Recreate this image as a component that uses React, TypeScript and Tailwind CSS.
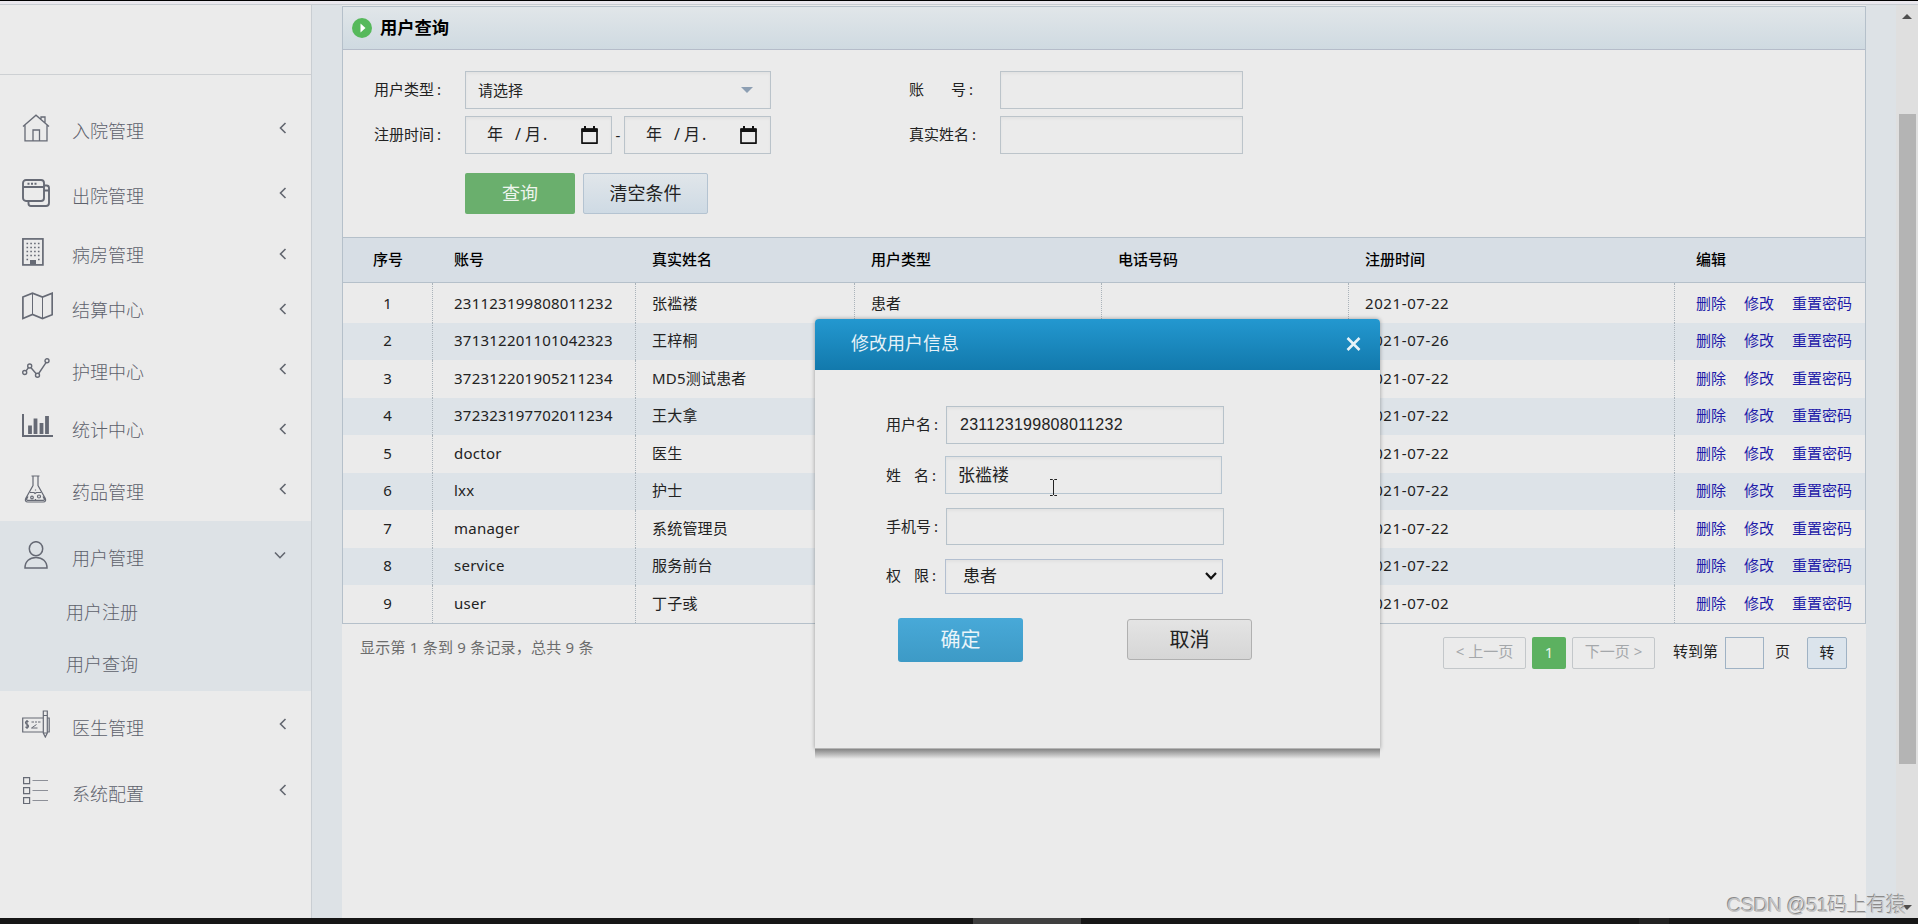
import type { ReactNode } from "react";

const Svg = ({ w, h, children, sw = 1.3 }: { w: number; h: number; sw?: number; children: ReactNode }) => (
  <svg width={w} height={h} viewBox={`0 0 ${w} ${h}`} fill="none" stroke="#666a75" strokeWidth={sw}>
    {children}
  </svg>
);

const HomeIcon = () => (
  <Svg w={28} h={28}>
    <path d="M1 12.5 14 1.2 27 12.5M3 11v15.8h22V11M19 5V3h4v5.500M11 26.500V16h6.500v10.500" />
  </Svg>
);
const WindowsIcon = () => (
  <Svg w={28} h={28} sw={1.9}>
    <rect x="1" y="1" width="21" height="21" rx="3" />
    <path d="M1 8h21M22 6.500h2.500a2.500 2.500 0 0 1 2.500 2.500v15a3 3 0 0 1-3 3H9a2.500 2.500 0 0 1-2.500-2.500V22M22 11.500h5" />
    <path d="M5.500 4.700h2M9 4.700h2M12.500 4.700h2" />
  </Svg>
);
const BuildingIcon = () => (
  <Svg w={28} h={28} sw={1.7}>
    <rect x="0.900" y="0.900" width="20" height="26" />
    <path d="M4.500 5.500h14M4.500 9.500h14M4.500 13.500h14M4.500 17.500h14" strokeDasharray="1.600 2.200" />
    <path d="M4.500 21.500h1.600M16 21.500h1.600" />
    <path d="M8 22h6v4.500H8z" fill="#666a75" stroke="none" />
  </Svg>
);
const MapIcon = () => (
  <Svg w={31} h={28} sw={1.7}>
    <path d="M.9 5 10.500 1.200 20.500 5 30.200 1.200v21.500L20.500 26.500 10.500 22.500.900 26.500z" />
    <path d="M10.500 1v21.500M20.500 5v21.500" strokeWidth="1" />
  </Svg>
);
const GraphIcon = () => (
  <Svg w={28} h={20} sw={1.4}>
    <circle cx="2.700" cy="14.500" r="2" />
    <circle cx="7.700" cy="8" r="2" />
    <circle cx="15.500" cy="17.300" r="2" />
    <circle cx="25" cy="2.800" r="2" />
    <path d="M4 13 6.500 9.700M9 9.700 14.200 15.700M16.700 15.500 24 4.700" />
  </Svg>
);
const BarsIcon = () => (
  <Svg w={31} h={24} sw={2}>
    <path d="M1 0v22h30" />
    <path d="M8 20v-8.500M13.500 20V4.500M19.500 20V9M25 20V2" strokeWidth="3.800" />
  </Svg>
);
const FlaskIcon = () => (
  <Svg w={28} h={28} sw={1.2}>
    <path d="M9.500 1h8M11 1v9.500L3.700 23.500c-.900 2 0 3.500 2 3.500h15.600c2 0 2.900-1.500 2-3.500L16 10.500V1M8 17.500h4l1 1 1.500-1H19M6 21.500l-1.200 2.200c-.500 1 0 1.700 1 1.700h15.400c1 0 1.500-.700 1-1.700L21 21.500" />
    <circle cx="10" cy="22.500" r="1.300" />
    <circle cx="17" cy="21.500" r="1.500" />
    <path d="M13.500 14.500v1M13.500 24v1" />
  </Svg>
);
const UserIcon = () => (
  <Svg w={28} h={28} sw={1.5}>
    <ellipse cx="14" cy="7.700" rx="6.700" ry="7" />
    <path d="M3 27c0-6.500 4.500-10.500 11-10.500S25 20.500 25 27z" />
  </Svg>
);
const ChequeIcon = () => (
  <Svg w={28} h={28} sw={1.2}>
    <path d="M21 8H.7v14H21M25.500 8h1.700v14h-1.700M21.300 1h4v22l-2 4-2-4zM21.300 5.500h4M21.300 23h4" />
    <path d="M6.500 11.700c-2-1.200-3.700.300-2.700 1.800.7 1.200 2.500 1 2.700 2.500.1 1.700-2 2-3.200.900M5 10v9" />
    <path d="M9.500 12h2.500M13 12h2M16 12h2.500M14.500 14.500l-5 3.500h6" strokeWidth="1" />
  </Svg>
);
const ListIcon = () => (
  <Svg w={28} h={28} sw={1.2}>
    <path d="M1.600 1.600h6v6h-6zM1.600 11.600h6v6h-6zM1.600 21.600h6v6h-6z" />
    <path d="M10.500 4.500H26M10.500 14.500H26M10.500 24.500H26" strokeWidth="1" stroke="#8d9098" />
  </Svg>
);

const Chevron = ({ open = false }: { open?: boolean }) => (
  <svg width="12" height="12" viewBox="0 0 12 12" fill="none" stroke="#62666f" strokeWidth="1.600">
    {open ? <path d="M1 3.500 6 8.700 11 3.500" /> : <path d="M8.500 1 3.500 6 8.500 11" />}
  </svg>
);

type Item = { label: string; icon: ReactNode; row: string; chev: string; open?: boolean };

const topItems: Item[] = [
  { label: "入院管理", icon: <HomeIcon />, row: "h-[65px]", chev: "" },
  { label: "出院管理", icon: <WindowsIcon />, row: "h-[65px]", chev: "" },
  { label: "病房管理", icon: <BuildingIcon />, row: "h-[53px]", chev: "pt-[4px]" },
  { label: "结算中心", icon: <MapIcon />, row: "h-[56px]", chev: "pt-[5px]" },
  { label: "护理中心", icon: <GraphIcon />, row: "h-[68px]", chev: "pt-[1px]" },
  { label: "统计中心", icon: <BarsIcon />, row: "h-[48px]", chev: "pt-[5px]" },
  { label: "药品管理", icon: <FlaskIcon />, row: "mt-[6px] h-[65px]", chev: "" },
];
const bottomItems: Item[] = [
  { label: "医生管理", icon: <ChequeIcon />, row: "h-[66px]", chev: "" },
  { label: "系统配置", icon: <ListIcon />, row: "h-[66px]", chev: "" },
];

const NavRow = ({ item }: { item: Item }) => (
  <div className={`flex items-center pl-[22px] ${item.row}`}>
    <span className="w-[50px] shrink-0">{item.icon}</span>
    <span className="w-[202px] shrink-0 pt-[7px] text-[18px] leading-6 font-light text-[#5d616b]">{item.label}</span>
    <span className={item.open ? "" : `pl-[3px] ${item.chev}`}>
      <Chevron open={item.open} />
    </span>
  </div>
);

const Sidebar = () => (
  <aside className="flex w-[312px] shrink-0 flex-col border-r border-[#c9ced3] bg-[#ebebeb]">
    <div className="h-[70px] border-b border-[#cdd0d3]" />
    <nav className="pt-[20px]">
      {topItems.map((i) => (
        <NavRow key={i.label} item={i} />
      ))}
      <div className="h-[170px] bg-[#dde2e6] text-[18px] font-light text-[#5d616b]">
        <NavRow item={{ label: "用户管理", icon: <UserIcon />, row: "h-[67px]", chev: "", open: true }} />
        <div className="flex h-[49px] items-center pl-[66px]">用户注册</div>
        <div className="flex h-[54px] items-center pl-[66px]">用户查询</div>
      </div>
      {bottomItems.map((i) => (
        <NavRow key={i.label} item={i} />
      ))}
    </nav>
  </aside>
);

const CalendarIcon = () => (
  <svg width="17" height="18" viewBox="0 0 17 18">
    <path d="M1 3h15v14.200H1z" fill="none" stroke="#111" strokeWidth="1.700" strokeLinejoin="round" />
    <path d="M.5 2.500h16V6H.5zM3 0h2v3H3zM12 0h2v3h-2z" fill="#111" />
  </svg>
);

const DateBox = () => (
  <div className="flex h-[38px] w-[147px] items-center border border-[#bac3ca] pl-[21px] text-[16px] shadow-[inset_0_2px_3px_rgba(0,0,0,0.04)]">
    <span className="w-[28px] pb-[2px]">年</span>
    <span className="w-[10px] pb-[2px]">/</span>
    <span className="w-[18px] pb-[2px]">月</span>
    <span className="w-[38px] pb-[2px]">.</span>
    <CalendarIcon />
  </div>
);

const Colon = () => <span className="pl-[3px]">:</span>;

const SearchForm = () => (
  <div className="flex h-[187px] flex-col pt-[21px] text-[15px]">
    <div className="flex h-[38px] items-center">
      <span className="w-[122px] pb-[2px] pl-[31px]">
        用户类型
        <Colon />
      </span>
      <div className="flex h-[38px] w-[306px] items-center justify-between border border-[#bac3ca] pr-[17px] pl-[12px] shadow-[inset_0_2px_3px_rgba(0,0,0,0.04)]">
        请选择
        <svg width="12" height="6" viewBox="0 0 12 6">
          <path d="M0 0h12L6 6z" fill="#8d9fb3" />
        </svg>
      </div>
      <span className="ml-[138px] flex w-[91px] pb-[2px]">
        <span className="w-[42px]">账</span>号
        <Colon />
      </span>
      <div className="h-[38px] w-[243px] border border-[#bcc4ca] shadow-[inset_0_2px_3px_rgba(0,0,0,0.04)]" />
    </div>
    <div className="mt-[7px] flex h-[38px] items-center">
      <span className="w-[122px] pb-[2px] pl-[31px]">
        注册时间
        <Colon />
      </span>
      <DateBox />
      <span className="w-[12px] text-center">-</span>
      <DateBox />
      <span className="ml-[138px] w-[91px] pb-[2px]">
        真实姓名
        <Colon />
      </span>
      <div className="h-[38px] w-[243px] border border-[#bcc4ca] shadow-[inset_0_2px_3px_rgba(0,0,0,0.04)]" />
    </div>
    <div className="mt-[19px] flex gap-2 pl-[122px] text-[18px]">
      <button className="h-[41px] w-[110px] rounded-[2px] bg-[#6aaf6d] text-[#eef5ee]">查询</button>
      <button className="h-[41px] w-[125px] rounded-[2px] border border-[#b4c3d1] bg-linear-to-b from-[#e1e6ea] to-[#cedae4]">清空条件</button>
    </div>
  </div>
);

const rows = [
  ["231123199808011232", "张褴褛", "患者", "2021-07-22"],
  ["371312201101042323", "王梓桐", "", "2021-07-26"],
  ["372312201905211234", "MD5测试患者", "", "2021-07-22"],
  ["372323197702011234", "王大拿", "", "2021-07-22"],
  ["doctor", "医生", "", "2021-07-22"],
  ["lxx", "护士", "", "2021-07-22"],
  ["manager", "系统管理员", "", "2021-07-22"],
  ["service", "服务前台", "", "2021-07-22"],
  ["user", "丁子彧", "", "2021-07-02"],
];

const grid = "grid grid-cols-[90px_203px_219px_247px_247px_326px_190px]";
const cell = "flex items-center border-r border-dotted border-[#aab3ba]";

const Table = () => (
  <div className="text-[15px]">
    <div className={`${grid} h-[46px] items-center border-y border-[#b5c0ca] bg-[#d7dee5] pb-[2px] font-medium text-black`}>
      <span className="text-center">序号</span>
      <span className="pl-[21px]">账号</span>
      <span className="pl-[16px]">真实姓名</span>
      <span className="pl-[16px]">用户类型</span>
      <span className="pl-[16px]">电话号码</span>
      <span className="pl-[16px]">注册时间</span>
      <span className="pl-[21px]">编辑</span>
    </div>
    <div className="border-b border-[#b5c0ca]">
      {rows.map(([account, name, type, date], i) => {
        const pad = i === 0 ? "pt-[1px]" : "pb-[2px]";
        return (
          <div key={account} className={`${grid} ${i === 0 ? "h-[39.500px]" : "h-[37.500px]"} ${i % 2 ? "bg-[#dde3e8]" : ""}`}>
            <span className={`${cell} ${pad} justify-center`}>{i + 1}</span>
            <span className={`${cell} ${pad} pl-[21px] tracking-[0.240px]`}>{account}</span>
            <span className={`${cell} ${pad} pl-[16px] tracking-[0.200px]`}>{name}</span>
            <span className={`${cell} ${pad} pl-[16px]`}>{type}</span>
            <span className={cell} />
            <span className={`${cell} ${pad} pl-[16px] tracking-[0.600px]`}>{date}</span>
            <span className={`flex items-center pl-[21px] text-[#1d1aa8] ${pad}`}>
              <a className="w-[48px]">删除</a>
              <a className="w-[48px]">修改</a>
              <a>重置密码</a>
            </span>
          </div>
        );
      })}
    </div>
  </div>
);

const Pager = () => (
  <div className="flex justify-between pr-[19px] pl-[18px] text-[15px]">
    <span className="pt-[12px] tracking-[0.220px] text-[#6c6c6c]">显示第 1 条到 9 条记录，总共 9 条</span>
    <div className="flex items-center pt-[13px]">
      <span className="flex h-[32px] w-[83px] items-center justify-center rounded-[2px] border border-[#c3c7ca] pb-[2px] text-[#a4a7aa]">&lt; 上一页</span>
      <span className="ml-[6px] flex h-[32px] w-[34px] items-center justify-center rounded-[2px] bg-[#5cb160] pb-[1px] text-[#e9f5e9]">1</span>
      <span className="ml-[6px] flex h-[32px] w-[83px] items-center justify-center rounded-[2px] border border-[#c3c7ca] pb-[2px] text-[#a4a7aa]">下一页 &gt;</span>
      <span className="ml-[18px] w-[52px] pb-[3px]">转到第</span>
      <span className="h-[32px] w-[39px] border border-[#9fb2c4]" />
      <span className="ml-[11px] w-[32px] pb-[3px]">页</span>
      <span className="flex h-[32px] w-[40px] items-center justify-center rounded-[2px] border border-[#9fb2c4] bg-[#dbe4ec] pb-[1px]">转</span>
    </div>
  </div>
);

const Modal = () => (
  <div className="absolute top-[319px] left-[815px] w-[565px] rounded-t-[4px] shadow-[0_0_4px_rgba(0,0,0,0.35)]">
    <div className="flex h-[51px] items-center justify-between rounded-t-[4px] bg-linear-to-b from-[#2398d0] to-[#1279ac] pr-[19px] pb-[2px] pl-[36px] text-[18px] text-[#e6f2f8]">
      修改用户信息
      <svg width="15" height="14" viewBox="0 0 15 14" stroke="#e6f2f8" strokeWidth="2.600">
        <path d="M1.500 1 13.500 13M13.500 1 1.500 13" />
      </svg>
    </div>
    <div className="h-[379px] border-b border-[#b5b5b5] bg-[#ebebeb] pt-[36px] pl-[71px] text-[15px]">
      <div className="flex h-[38px] items-center">
        <span className="w-[60px] pb-[1px]">
          用户名
          <Colon />
        </span>
        <div className="flex h-[38px] w-[278px] items-center border border-[#b7c2ca] pb-[1px] pl-[13px] font-['Liberation_Sans'] text-[16px] tracking-[0.280px] shadow-[inset_0_2px_3px_rgba(0,0,0,0.04)]">
          231123199808011232
        </div>
      </div>
      <div className="mt-[12px] flex h-[38px] items-center">
        <span className="flex w-[59px]">
          <span className="w-[28px]">姓</span>名
          <Colon />
        </span>
        <div className="flex h-[38px] w-[277px] items-center border border-[#b7c5d0] pl-[12px] text-[17px] shadow-[inset_0_2px_3px_rgba(0,0,0,0.04)]">
          张褴褛
        </div>
      </div>
      <div className="mt-[14px] flex h-[37px] items-center">
        <span className="w-[60px] pb-[1px]">
          手机号
          <Colon />
        </span>
        <div className="h-[37px] w-[278px] border border-[#b7c2ca] shadow-[inset_0_2px_3px_rgba(0,0,0,0.04)]" />
      </div>
      <div className="mt-[14px] flex h-[35px] items-center">
        <span className="flex w-[59px] pb-[2px]">
          <span className="w-[28px]">权</span>限
          <Colon />
        </span>
        <div className="flex h-[35px] w-[278px] items-center justify-between border border-[#b3bfd0] pr-[5px] pb-[2px] pl-[17px] text-[17px] shadow-[inset_0_2px_3px_rgba(0,0,0,0.04)]">
          患者
          <svg width="12" height="8" viewBox="0 0 12 8" fill="none" stroke="#111" strokeWidth="2.200">
            <path d="M1 1 6 6.300 11 1" />
          </svg>
        </div>
      </div>
      <div className="mt-[24px] flex items-center pl-[12px] text-[20px]">
        <button className="h-[44px] w-[125px] rounded-[3px] bg-linear-to-b from-[#48a9d8] to-[#3d9ac6] text-[#eaf5fa]">确定</button>
        <button className="mt-[-2px] ml-[104px] h-[41px] w-[125px] rounded-[3px] border border-[#b0b0b0] bg-linear-to-b from-[#e4e4e4] to-[#d6d6d6] pt-[1px]">取消</button>
      </div>
    </div>
    <div className="absolute top-[430px] left-0 h-[10px] w-full bg-linear-to-b from-[#858585] to-[#ebebeb]" />
    <svg className="absolute top-[160px] left-[234px]" width="9" height="17" viewBox="0 0 9 17" fill="none" stroke="#222" strokeWidth="1">
      <path d="M1 .5h2.500l1 1 1-1H8M4.500 1v15M1 16.500h2.500l1-1 1 1H8" />
    </svg>
  </div>
);

const ScrollBar = () => (
  <div className="flex w-[22px] shrink-0 flex-col items-center bg-[#dfdfdf]">
    <svg className="mt-[9px]" width="10" height="5" viewBox="0 0 10 5">
      <path d="M0 5h10L5 0z" fill="#4f4f4f" />
    </svg>
    <div className="mt-[95px] h-[650px] w-[17px] bg-[#b4b4b4]" />
    <svg className="mt-[141px]" width="10" height="5" viewBox="0 0 10 5">
      <path d="M0 0h10L5 5z" fill="#4f4f4f" />
    </svg>
  </div>
);

export default function App() {
  return (
    <div className="relative flex h-[924px] w-full flex-col overflow-hidden bg-[#dde2e6] font-['Noto_Sans','Noto_Sans_CJK_SC',sans-serif] text-[#222]">
      <div className="h-[5px] shrink-0 border-t border-b border-t-black border-b-[#c8cdd2] bg-[#eae8ee]" />
      <div className="flex h-[913px] shrink-0">
        <Sidebar />
        <main className="ml-[30px] flex w-[1524px] flex-col bg-[#ebebeb]">
          <section className="mt-[1px] border-x border-t border-[#b5c0ca]">
            <div className="flex h-[43px] items-center border-b border-[#b5bcc9] bg-linear-to-b from-[#e1e6e9] to-[#cfdae1] pl-[9px] text-[17.300px] font-bold text-black">
              <svg width="20" height="20" viewBox="0 0 20 20">
                <circle cx="10" cy="10" r="10" fill="#56b95b" />
                <path d="M8.500 5.500 13.500 10 8.500 14.500z" fill="#fff" />
              </svg>
              <span className="ml-[8px]">用户查询</span>
            </div>
            <SearchForm />
            <Table />
          </section>
          <Pager />
        </main>
        <div className="w-[30px] shrink-0" />
        <ScrollBar />
      </div>
      <div className="flex h-[6px] shrink-0 bg-[#161616]">
        <div className="ml-[973px] w-[108px] bg-[#3f3f3f]" />
        <div className="ml-[558px] w-[30px] bg-[#222]" />
      </div>
      <Modal />
      <div className="absolute top-[891px] left-[1727px] font-['Liberation_Sans','Noto_Sans_CJK_SC',sans-serif] text-[20px] leading-7 font-light tracking-[-0.500px] whitespace-nowrap text-[#c4c4c4] [text-shadow:-1px_-1px_0_#8a8a8a]">
        CSDN @51码上有猿
      </div>
    </div>
  );
}
